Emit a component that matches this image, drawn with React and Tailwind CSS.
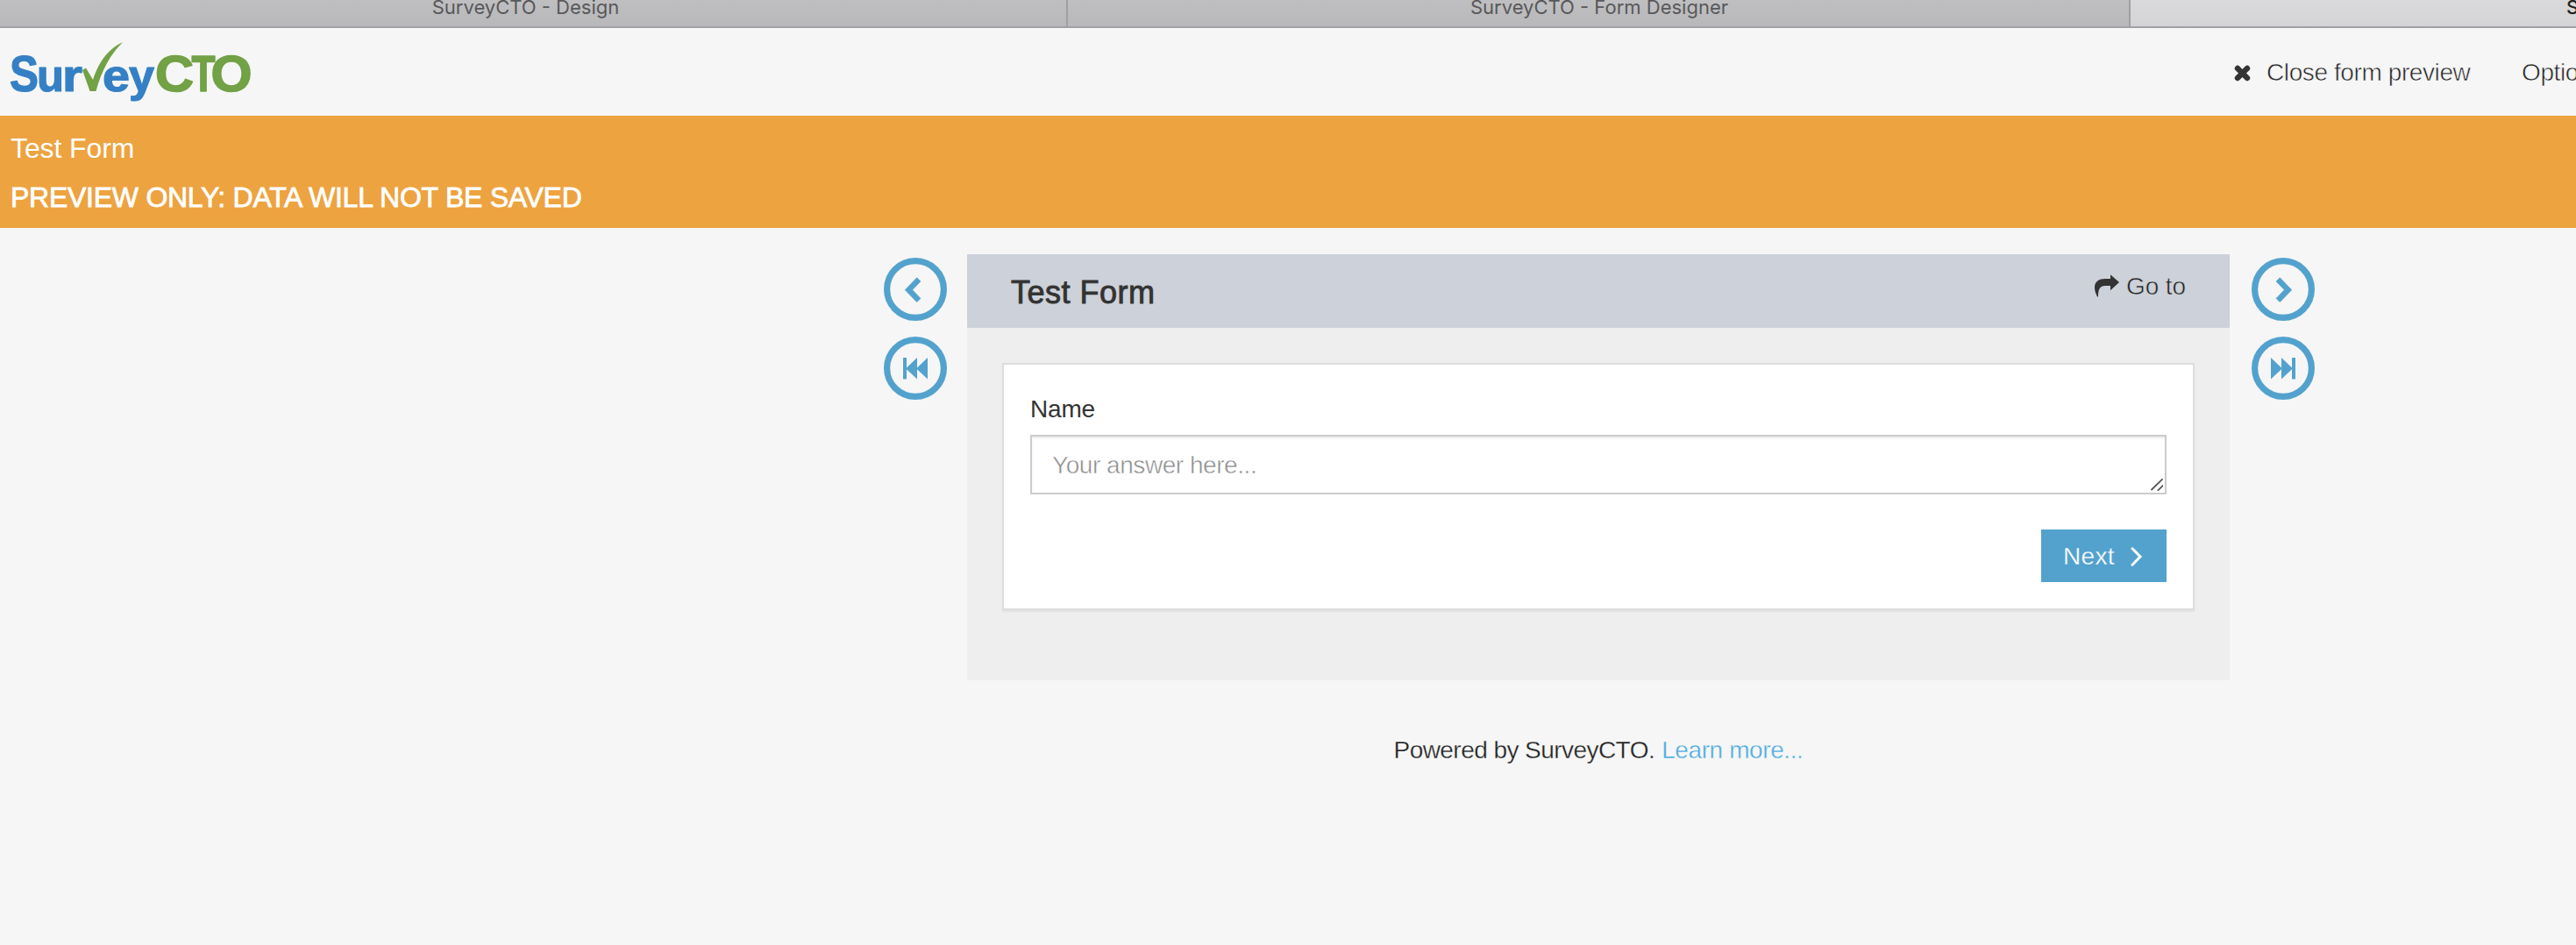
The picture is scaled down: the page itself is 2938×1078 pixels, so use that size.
import React from 'react';

function Logo() {
  const font = '"Liberation Sans", Arial, sans-serif';
  return (
    <svg className="block h-[68px] w-[274px] shrink-0 overflow-hidden" viewBox="12 48 274 68" aria-label="SurveyCTO">
      <g fontFamily={font} fontWeight="700" fontSize="58" strokeLinejoin="round">
        <g fill="#3580c5" stroke="#3580c5" strokeWidth="1.2">
          <text x="11" y="103.500" textLength="33" lengthAdjust="spacingAndGlyphs">S</text>
          <text x="42" y="103.500" fontSize="52" textLength="31" lengthAdjust="spacingAndGlyphs">u</text>
          <text x="71" y="103.500" fontSize="52" textLength="23" lengthAdjust="spacingAndGlyphs">r</text>
          <text x="117" y="103.500" fontSize="52" textLength="31" lengthAdjust="spacingAndGlyphs">e</text>
          <text x="147" y="103.500" fontSize="52" textLength="29" lengthAdjust="spacingAndGlyphs">y</text>
        </g>
        <g fill="#73a146" stroke="#73a146" strokeWidth="1.6">
          <text x="177" y="103.500" textLength="44" lengthAdjust="spacingAndGlyphs">C</text>
          <text x="218.500" y="103.500" textLength="27" lengthAdjust="spacingAndGlyphs">T</text>
          <text x="240.500" y="103.500" textLength="47" lengthAdjust="spacingAndGlyphs">O</text>
        </g>
      </g>
      <path d="M94 80 L98 77.5 L106 91 C112 73 122 56 140 48.3 C126 62 116 80 109.5 104 H102.5 Z" fill="#73a146" />
    </svg>
  );
}

function RoundButton({ label, children }) {
  return (
    <button aria-label={label} className="block size-[72px] text-[#53a2ce]">
      <svg viewBox="0 0 72 72" className="block size-[72px]" fill="currentColor">
        <circle cx="36" cy="36" r="32.4" fill="none" stroke="currentColor" strokeWidth="7.2" />
        {children}
      </svg>
    </button>
  );
}

const CHEVRON = 'M24.3 36.7 L37.7 22.8 L41.9 27 L32.6 36.7 L41.9 46.4 L37.7 50.6 Z';
const STEP = 'M22 24.500 Q22 24 22.500 24 H25.500 Q26 24 26 24.500 V35.4 L38 24 V35.4 L50 24 V48.500 L38 37.2 V48.500 L26 37.2 V48 Q26 48.500 25.500 48.500 H22.500 Q22 48.500 22 48 Z';

function Mirror({ children }) {
  return <g transform="matrix(-1 0 0 1 72 0)">{children}</g>;
}

export default function App() {
  return (
    <div className='h-[1078px] w-[2938px] overflow-hidden bg-[#f6f6f6] font-["Liberation_Sans",Arial,sans-serif] text-[28px] leading-8 text-[#333]'>
      <div className='flex h-8 border-b-2 border-[#a0a0a2] bg-linear-to-b from-[#bfbfc1] to-[#b8b8ba] font-["Inter",sans-serif] text-[22px] leading-[26px] text-[#58585a]'>
        <div className="flex w-[1218px] justify-center border-r-2 border-[#a0a0a2] pr-[17px]">
          <span className="-mt-[5px]">SurveyCTO - Design</span>
        </div>
        <div className="flex w-[1212px] justify-center border-r-2 border-[#a0a0a2] pl-0.5">
          <span className="-mt-[5px]">SurveyCTO - Form Designer</span>
        </div>
        <div className="flex flex-1 overflow-hidden bg-linear-to-b from-[#dadadc] to-[#d4d4d6] pl-[497px] font-medium text-[#222]">
          <span className="-mt-[5px] whitespace-nowrap">SurveyCTO</span>
        </div>
      </div>

      <header className="flex h-[100px] items-start pt-4 pl-3">
        <Logo />
        <nav className="mt-[19px] ml-[2262px] flex shrink-0 whitespace-nowrap tracking-[-0.4px] text-[#222] [-webkit-text-stroke:0.6px_#f6f6f6]">
          <svg viewBox="0 0 19 19" className="mt-[6.5px] mr-[18px] block size-[19px] shrink-0 stroke-[#333]" strokeWidth="6.4" strokeLinecap="round">
            <path d="M4 4 L15 15 M15 4 L4 15" />
          </svg>
          <span className="w-[291px]">Close form preview</span>
          <span>Options</span>
        </nav>
      </header>

      <div className="h-32 bg-[#eda340] pt-[19px] pl-3 text-[32px] leading-9 text-white">
        <div className="tracking-[-0.1px]">Test Form</div>
        <div className="mt-5 tracking-[-0.26px] [-webkit-text-stroke:0.8px_white]">PREVIEW ONLY: DATA WILL NOT BE SAVED</div>
      </div>

      <main className="mt-[30px] flex pl-[1008px]">
        <div className="mt-1 flex flex-col gap-[18px]">
          <RoundButton label="Previous"><path d={CHEVRON} stroke="currentColor" strokeLinejoin="round" strokeWidth="0.8" /></RoundButton>
          <RoundButton label="First"><path d={STEP} /></RoundButton>
        </div>

        <div className="ml-[23px] w-[1440px] shrink-0">
          <section className="h-[486px] bg-[#eee]">
            <div className="flex h-[84px] justify-between bg-[#cdd1d9] px-[50px]">
              <h1 className="mt-6 text-[36px] leading-10 tracking-[0.5px] [-webkit-text-stroke:0.9px_#333]">Test Form</h1>
              <div className="mt-[21px] flex">
                <svg viewBox="0 0 28 26" className="mt-0.5 mr-2 block h-[26px] w-7 fill-[#333]">
                  <path d="M18 0.3 L28 9 L18 18.3 V13 H12 C6 13 4 17 4 25.5 H3 C1 21 0 18.500 0 15 C0 8 5 5 12 5 H18 Z" />
                </svg>
                <span className="tracking-[-0.1px] text-[#222] [-webkit-text-stroke:0.6px_#cdd1d9]">Go to</span>
              </div>
            </div>

            <div className="mx-10 mt-10 h-[282px] border-2 border-[#ddd] bg-white px-[30px] pt-[35px] shadow-[0_2px_2px_rgba(0,0,0,0.05)]">
              <div className="tracking-[-0.2px]">Name</div>
              <div className="relative mt-[13px] h-[68px] border-2 border-[#ccc] pt-[17px] pr-6 pl-[23px] tracking-[-0.45px] text-[#8c8c8c] shadow-[inset_0_2px_2px_rgba(0,0,0,0.075)] [-webkit-text-stroke:0.5px_white]">
                Your answer here...
                <svg viewBox="0 0 14 14" className="absolute right-0.5 bottom-0.5 size-3.5 stroke-[#555]" strokeWidth="1.8" strokeLinecap="round">
                  <path d="M1 12.500 L13 0.8 M8.300 13.300 L13.800 8" />
                </svg>
              </div>
              <button className="mt-10 ml-auto flex h-[60px] w-[143px] items-start bg-[#53a2ce] pt-[15px] pl-[25px] text-white">
                <span className="tracking-[0.3px] [-webkit-text-stroke:0.3px_#53a2ce]">Next</span>
                <svg viewBox="0 0 14 22" className="mt-[5px] ml-[18px] block h-[22px] w-3.5 fill-none stroke-white" strokeWidth="3" strokeLinecap="round">
                  <path d="M2 1.800 L11 11 L2 20.200" />
                </svg>
              </button>
            </div>
          </section>

          <p className="mt-16 flex justify-center gap-2 tracking-[-0.55px]">
            <span className="text-[#222] [-webkit-text-stroke:0.3px_#f6f6f6]">Powered by SurveyCTO.</span>
            <a className="tracking-[-0.4px] text-[#4bacdf] [-webkit-text-stroke:0.4px_#f6f6f6]">Learn more...</a>
          </p>
        </div>

        <div className="mt-1 ml-[25px] flex flex-col gap-[18px]">
          <RoundButton label="Next"><Mirror><path d={CHEVRON} transform="translate(2 0)" stroke="currentColor" strokeLinejoin="round" strokeWidth="0.8" /></Mirror></RoundButton>
          <RoundButton label="Last"><Mirror><path d={STEP} /></Mirror></RoundButton>
        </div>
      </main>
    </div>
  );
}
